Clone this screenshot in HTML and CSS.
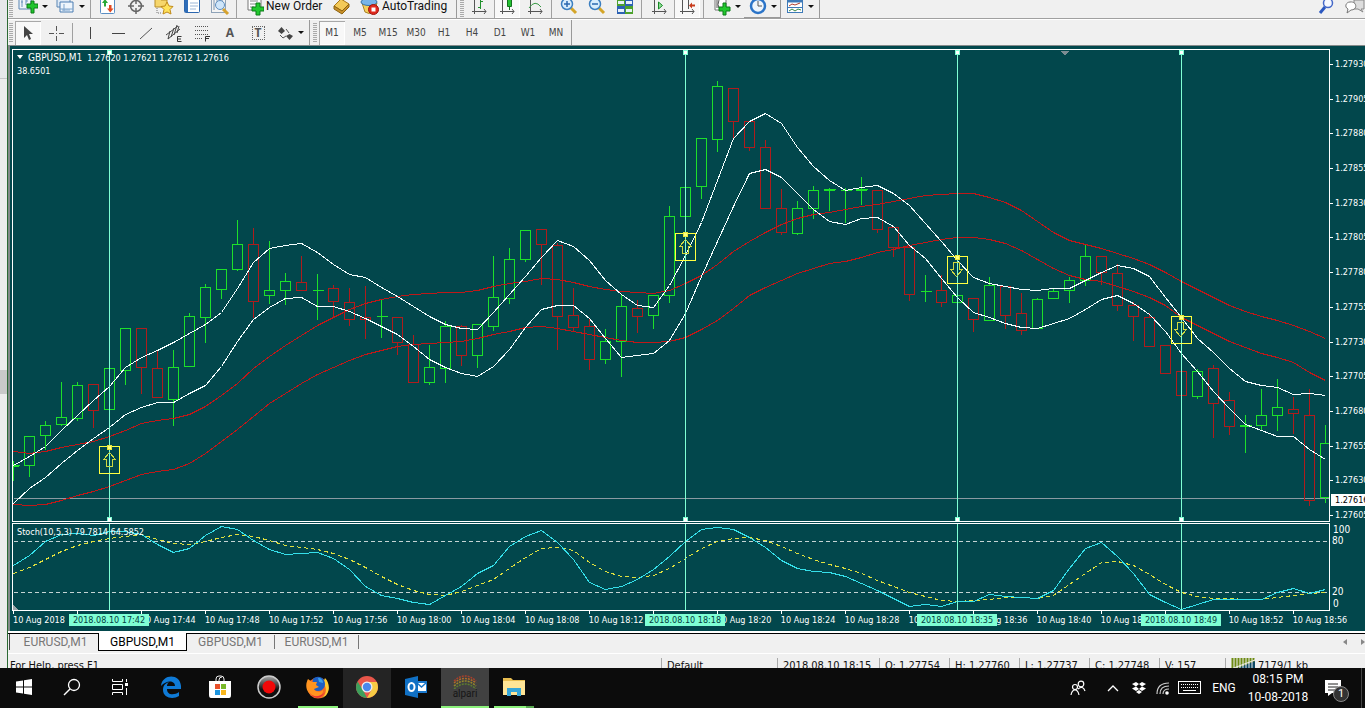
FILE: index.html
```html
<!DOCTYPE html>
<html lang="en">
<head>
<meta charset="utf-8">
<title>GBPUSD,M1</title>
<link rel="stylesheet" href="styles.css">
</head>
<body>
<div class="desktop">
  <div class="workspace">
    <div class="behind"><div class="behind-head"></div><div class="behind-thumb"></div></div>
    <main class="terminal">
      <div class="toolbar toolbar-main">
        <span class="grip"></span>
        <button class="tool tool-drop" aria-label="New chart"><svg width="20" height="18" viewBox="0 0 20 18"><path d="M1 1h12v11H1z" fill="#eef4fa" stroke="#5b86b4"/><path d="M4 3v7M8 2v6M3 5h2M8 4h2" stroke="#6b93bd" fill="none"/><path d="M9 7h4V4h3v3h4v4h-4v5h-3v-5H9z" fill="#1fc42c" stroke="#0a7a16"/></svg><i class="caret"></i></button>
        <button class="tool tool-drop" aria-label="Profiles"><svg width="20" height="18" viewBox="0 0 20 18"><path d="M2 1h13v9H2z" fill="#dfeaf6" stroke="#5b86b4"/><path d="M5 5h13v10H5z" fill="#eef5fc" stroke="#4b7db2"/><path d="M5 12h13M9 7v7M7 13h8" stroke="#7fa5cd"/></svg><i class="caret"></i></button>
        <span class="sep"></span>
        <button class="tool" aria-label="Market watch"><svg width="18" height="18" viewBox="0 0 18 18"><rect x="1.500" y="1.500" width="14" height="15" rx="1" fill="#fff" stroke="#5b8fc4"/><path d="M5 9.500V6H3l3-4 3 4H7v3.500z" fill="#28a838"/><path d="M10 8h2.500v3.500h2l-3.200 4-3.300-4h2z" fill="#e24a22"/></svg></button>
        <button class="tool" aria-label="Data window"><svg width="18" height="18" viewBox="0 0 18 18"><circle cx="9" cy="9" r="5.500" fill="none" stroke="#666" stroke-width="1.500"/><path d="M9 1v6M9 11v6M1 9h6M11 9h6" stroke="#666" stroke-width="1.500"/></svg></button>
        <button class="tool" aria-label="Navigator"><svg width="20" height="18" viewBox="0 0 20 18"><path d="M1 3V1h5l1 2h6v7H1z" fill="#f6d66c" stroke="#b78d28"/><path d="M3 11v5h4" stroke="#777" stroke-dasharray="1 1" fill="none"/><path d="M13 5l2 4 4 .5-3 3 1 4.500-4-2-4 2 1-4.500-3-3 4-.5z" fill="#ffe25a" stroke="#c08a1a"/></svg></button>
        <button class="tool" aria-label="Terminal"><svg width="18" height="18" viewBox="0 0 18 18"><rect x="1.500" y="1.500" width="15" height="14" rx="1" fill="#fff" stroke="#2b66ae"/><path d="M2 2h3v13H2z" fill="#2f6db8"/><path d="M7 6h8M7 9h8M7 12h6" stroke="#9cb6d6"/></svg></button>
        <button class="tool" aria-label="Strategy tester"><svg width="20" height="20" viewBox="0 0 20 20"><rect x="1.500" y="1.500" width="14" height="15" fill="#f4f4f4" stroke="#8fa3b8"/><path d="M4 4v10M7 3v8M12 3v7" stroke="#7d94ad"/><circle cx="10" cy="9" r="4.500" fill="#cfe6fa" stroke="#5f8fc0"/><path d="M13 13l5 5" stroke="#d6a22e" stroke-width="3"/></svg></button>
        <span class="sep"></span>
        <button class="tool tool-text tool-order"><svg width="18" height="20" viewBox="0 0 18 20"><path d="M2 0h10l3 4v10H2z" fill="#fff" stroke="#777"/><path d="M4 5h8M4 8h8M4 11h4" stroke="#888"/><path d="M6 11h4V7h4v4h4v4h-4v4h-4v-4H6z" fill="#22c82e" stroke="#0b7c18"/></svg>New Order</button>
        <button class="tool" aria-label="MetaEditor"><svg width="18" height="18" viewBox="0 0 18 18"><path d="M1 9l7-7 8 5-7 7z" fill="#f4ca58" stroke="#a87818"/><path d="M1 9v3l8 5 7-7V7l-7 7z" fill="#c8902a" stroke="#8e6410"/></svg></button>
        <button class="tool tool-text tool-auto"><svg width="20" height="19" viewBox="0 0 20 19"><path d="M2 6h15l-3 9q-5 3-9 0z" fill="#f5cf5c" stroke="#a88228"/><ellipse cx="9" cy="5" rx="8" ry="3.500" fill="#78b4e8" stroke="#3572a8"/><circle cx="13.500" cy="12.500" r="5" fill="#e02a1e" stroke="#a0140e"/><path d="M11.500 10.500h4v4h-4z" fill="#fff"/></svg>AutoTrading</button>
        <span class="edge"></span>
        <span class="grip"></span>
        <button class="tool" aria-label="Bar chart"><svg width="18" height="18" viewBox="0 0 18 18"><path d="M4.500 2v15M2 14.500h14M14 12l2 2.500-2 2.500" fill="none" stroke="#555"/><path d="M10.500 2v10M8 10.500h3M10 4.500h3" stroke="#20902c" fill="none"/></svg></button>
        <button class="tool pressed" aria-label="Candlesticks"><svg width="18" height="18" viewBox="0 0 18 18"><path d="M4.500 2v15M2 14.500h14M14 12l2 2.500-2 2.500" fill="none" stroke="#555"/><path d="M11.500 1v12" stroke="#15701f"/><path d="M9.500 2.500h4v7h-4z" fill="#24c232" stroke="#15701f"/></svg></button>
        <button class="tool" aria-label="Line chart"><svg width="18" height="18" viewBox="0 0 18 18"><path d="M4.500 2v15M2 14.500h14M14 12l2 2.500-2 2.500" fill="none" stroke="#555"/><path d="M3 11q6-9 12-1" stroke="#3a9a46" fill="none"/></svg></button>
        <span class="sep"></span>
        <button class="tool" aria-label="Zoom in"><svg width="18" height="18" viewBox="0 0 18 18"><path d="M11 11l5 5" stroke="#d4a528" stroke-width="3"/><circle cx="7" cy="7" r="5.500" fill="#d8edfc" stroke="#3c7fc0" stroke-width="1.500"/><path d="M4 7h6M7 4v6" stroke="#2a68b0" stroke-width="1.500"/></svg></button>
        <button class="tool" aria-label="Zoom out"><svg width="18" height="18" viewBox="0 0 18 18"><path d="M11 11l5 5" stroke="#d4a528" stroke-width="3"/><circle cx="7" cy="7" r="5.500" fill="#d8edfc" stroke="#3c7fc0" stroke-width="1.500"/><path d="M4 7h6" stroke="#2a68b0" stroke-width="1.500"/></svg></button>
        <button class="tool" aria-label="Tile windows"><svg width="18" height="18" viewBox="0 0 18 18"><path d="M1 1h8v8H1z" fill="#4da22c"/><path d="M9 1h8v8H9z" fill="#2d62b4"/><path d="M1 9h8v8H1z" fill="#2d62b4"/><path d="M9 9h8v8H9z" fill="#4da22c"/><path d="M2 4h6v3H2zM10 4h6v3h-6zM2 12h6v3H2zM10 12h6v3h-6z" fill="#e8f2f8"/></svg></button>
        <span class="sep"></span>
        <button class="tool" aria-label="Auto scroll"><svg width="18" height="18" viewBox="0 0 18 18"><path d="M4.500 2v15M2 14.500h14M14 12l2 2.500-2 2.500" fill="none" stroke="#555"/><path d="M8.500 5l4 3.500-4 3.500z" fill="#8fdc96" stroke="#168a24"/></svg></button>
        <button class="tool pressed" aria-label="Chart shift"><svg width="18" height="18" viewBox="0 0 18 18"><path d="M4.500 2v15M2 14.500h14M14 12l2 2.500-2 2.500M10.500 2v10" fill="none" stroke="#555"/><path d="M11 8.500l3-3v2h3v2h-3v2z" fill="#c83c1c"/></svg></button>
        <span class="sep"></span>
        <button class="tool tool-drop" aria-label="Indicators"><svg width="20" height="20" viewBox="0 0 20 20"><path d="M4 1h9l2 3v10H4z" fill="#fff" stroke="#777"/><path d="M6 3v9M8 4q-2 5 0 8" stroke="#555" fill="none"/><path d="M8 11h4V7h3v4h4v4h-4v4h-3v-4H8z" fill="#22c82e" stroke="#0b7c18"/></svg><i class="caret"></i></button>
        <button class="tool tool-drop framed" aria-label="Periodicity"><svg width="18" height="18" viewBox="0 0 18 18"><circle cx="9" cy="9" r="7" fill="#eef5fc" stroke="#2b74c8" stroke-width="2.500"/><path d="M9 4v5h4" fill="none" stroke="#555"/></svg><i class="caret"></i></button>
        <button class="tool tool-drop" aria-label="Templates"><svg width="18" height="18" viewBox="0 0 18 18"><rect x="1.500" y="1.500" width="15" height="14" fill="#fff" stroke="#3e7ab8"/><path d="M2 4h14" stroke="#3e7ab8" stroke-width="3"/><path d="M3 9l3-2 3 1 5-2" stroke="#b04030" fill="none"/><path d="M2 10.500h14" stroke="#3e7ab8"/><path d="M3 14l3-2 3 2 3-2 3 1" stroke="#3a8a4a" fill="none"/></svg><i class="caret"></i></button>
        <span class="edge"></span>
        <div class="corner">
          <button class="tool" aria-label="Search"><svg width="18" height="18" viewBox="0 0 18 18"><path d="M7 10l-5 6" stroke="#2b58c0" stroke-width="3"/><circle cx="10" cy="6" r="4.500" fill="#f6f9ff" stroke="#4468c8" stroke-width="1.500"/></svg></button>
          <button class="tool tool-chat" aria-label="Chat"><svg width="24" height="18" viewBox="0 0 24 18"><path d="M13 3h10v9h-3l2 3-5-3h-4z" fill="#ddd" stroke="#888"/><path d="M9 5c7-1 8 8 1 8l-4 3 1-4c-4-2-2-7 2-7z" fill="#fff" stroke="#777"/></svg></button>
        </div>
      </div>

      <div class="toolbar toolbar-line">
        <span class="grip"></span>
        <button class="tool pressed" aria-label="Cursor"><svg width="18" height="18" viewBox="0 0 18 18"><path d="M5 2v12l3-3 2 5 2-1-2-5h4z" fill="#444"/></svg></button>
        <button class="tool" aria-label="Crosshair"><svg width="18" height="18" viewBox="0 0 18 18"><path d="M9.500 2v5M9.500 12v5M2 9.500h5M12 9.500h5M9 9.500h1" stroke="#555"/></svg></button>
        <span class="sep"></span>
        <button class="tool" aria-label="Vertical line"><svg width="18" height="18" viewBox="0 0 18 18"><path d="M9.500 3v12" stroke="#444"/></svg></button>
        <button class="tool" aria-label="Horizontal line"><svg width="18" height="18" viewBox="0 0 18 18"><path d="M3 9.500h13" stroke="#444"/></svg></button>
        <button class="tool" aria-label="Trendline"><svg width="18" height="18" viewBox="0 0 18 18"><path d="M3 15L15 4" stroke="#555"/></svg></button>
        <button class="tool" aria-label="Channel"><svg width="20" height="20" viewBox="0 0 20 20"><path d="M2 12L14 3M4 16L16 6M6 8l-2 8M10 5l-3 9M13 2l-3 10M15 3l-2 7" stroke="#444" fill="none"/><path d="M17.500 13.500h-4v5h4M13 16h4" stroke="#333" fill="none"/></svg></button>
        <button class="tool" aria-label="Fibonacci"><svg width="20" height="20" viewBox="0 0 20 20"><path d="M3 3.500h14M3 7.500h14M3 11.500h14M3 15.500h8" stroke="#555" stroke-dasharray="1 1"/><path d="M13.500 18.500v-5H18M14 15.500h3" stroke="#333" fill="none"/></svg></button>
        <button class="tool tool-letter">A</button>
        <button class="tool tool-letter" aria-label="Text label"><span class="dotted">T</span></button>
        <button class="tool tool-drop" aria-label="Arrows"><svg width="18" height="18" viewBox="0 0 18 18"><path d="M2 7l3.500-4L9 7l-3.500 3zM10 12l3.500-2 3.500 2-3.500 4z" fill="#444"/><path d="M4 11l3 3 3-2M10 5l3 4" stroke="#555" fill="none"/></svg><i class="caret"></i></button>
        <span class="edge"></span>
        <span class="grip"></span>
        <button class="tool period pressed">M1</button>
        <button class="tool period">M5</button>
        <button class="tool period">M15</button>
        <button class="tool period">M30</button>
        <button class="tool period">H1</button>
        <button class="tool period">H4</button>
        <button class="tool period">D1</button>
        <button class="tool period">W1</button>
        <button class="tool period">MN</button>
        <span class="edge"></span>
      </div>

      <section class="chart">
        <div class="panel">
          <svg id="prices" class="plot" viewBox="12.5 49.5 1316 471" preserveAspectRatio="none" role="img" aria-label="GBPUSD one minute candles"></svg>
          <div class="caption"><span class="caption-caret"></span><span class="symbol">GBPUSD,M1</span>&nbsp; 1.27620 1.27621 1.27612 1.27616<br>38.6501</div>
        </div>
        <div class="scale" id="price-scale"></div>
        <div class="panel panel-stoch">
          <svg id="stoch" class="plot" viewBox="12.5 523.5 1316 86" preserveAspectRatio="none" role="img" aria-label="Stochastic oscillator"></svg>
          <div class="caption caption-stoch">Stoch(10,5,3) 79.7814 64.5852</div>
        </div>
        <div class="scale scale-stoch"><span>100</span><span class="level">80</span><span class="level level-low">20</span><span>0</span></div>
        <div class="times" id="times"></div>
      </section>

      <nav class="tabs">
        <button class="tab">EURUSD,M1</button>
        <button class="tab tab-active">GBPUSD,M1</button>
        <button class="tab tab-rule">GBPUSD,M1</button>
        <button class="tab tab-rule">EURUSD,M1</button>
        <span class="tab-arrows"><i class="arrow-left"></i><i class="arrow-right"></i></span>
      </nav>

      <footer class="status">
        <span class="cell cell-help">For Help, press F1</span>
        <span class="cell cell-profile">Default</span>
        <span class="cell cell-date">2018.08.10 18:15</span>
        <span class="cell">O: 1.27754</span>
        <span class="cell">H: 1.27760</span>
        <span class="cell">L: 1.27737</span>
        <span class="cell">C: 1.27748</span>
        <span class="cell cell-volume">V: 157</span>
        <span class="cell cell-net"><svg width="24" height="14" viewBox="0 0 24 14"><path d="M1.500 0v14M4.500 0v14M7.500 0v14M10.500 0v14M13.500 0v14M16.500 0v14M19.500 0v14M22.500 0v14" stroke="#6d8a12" stroke-width="2"/><path d="M0 13L24 3v11H0z" fill="#0e4a66"/><path d="M0 11L24 2M6 9v5M9 8v6M12 7v7M15 6v8M18 5v9M21 4v10" stroke="#efefef"/></svg>7179/1 kb</span>
      </footer>
    </main>
  </div>

  <div class="taskbar">
    <button class="task" aria-label="Start"><svg width="18" height="18" viewBox="0 0 18 18"><path d="M1 3.500l7-1V8.500H1zM9 2.300L17 1v7.500H9zM1 9.500h7v6l-7-1zM9 9.500h8V17l-8-1.200z" fill="#fff"/></svg></button>
    <button class="task" aria-label="Search"><svg width="18" height="18" viewBox="0 0 18 18"><circle cx="11" cy="7" r="5.500" fill="none" stroke="#fff" stroke-width="1.300"/><path d="M7 11l-6 6" stroke="#fff" stroke-width="1.500"/></svg></button>
    <button class="task" aria-label="Task view"><svg width="18" height="18" viewBox="0 0 18 18"><path d="M1.500 1v2.500h10V1M1.500 6.500h10v5h-10zM1.500 17v-2.500h10V17M15.500 1v3M15.500 10v7" fill="none" stroke="#fff"/><path d="M14 5h3v3h-3z" fill="#fff"/></svg></button>
    <div class="apps">
      <button class="task" aria-label="Edge"><svg width="22" height="24" viewBox="0 0 22 24"><path d="M1 11C2-1 20-2 21 11v3H7c0 7 8 6 12 3v4c-6 4-16 2-16-6 0-5 3-7 6-8-2 2-2 3-2 4h8c0-6-9-6-14 0z" fill="#0f7ad6"/></svg></button>
      <button class="task" aria-label="Store"><svg width="24" height="24" viewBox="0 0 24 24"><path d="M8 6V4q0-3 3-3h2q3 0 3 3v2M11 6V5q0-3 3-3" fill="none" stroke="#eee"/><path d="M1 6h22v14q0 3-2 3H3q-2 0-2-3z" fill="#fff"/><path d="M7 9h5v5H7z" fill="#e8502a"/><path d="M13 9h5v5h-5z" fill="#78b828"/><path d="M7 15h5v5H7z" fill="#1e96e0"/><path d="M13 15h5v5h-5z" fill="#f8b61c"/></svg></button>
      <button class="task" aria-label="Recorder"><svg width="26" height="26" viewBox="0 0 26 26"><defs><linearGradient id="rim" x2="0" y2="1"><stop stop-color="#aaa"/><stop offset=".6" stop-color="#111"/></linearGradient></defs><circle cx="13" cy="13" r="11" fill="url(#rim)" stroke="#ccc" stroke-width="1.500"/><circle cx="13" cy="13" r="6.500" fill="#f00808"/></svg></button>
      <button class="task task-open" aria-label="Firefox"><svg width="24" height="24" viewBox="0 0 24 24"><circle cx="12" cy="13" r="10.500" fill="#f36a24"/><path d="M19 3c6 6 5 17-3 20 5-4 5-11 1-15z" fill="#ffcb30"/><path d="M7 4c3-3 8-3 11 1 3 6-1 11-6 11-6 0-6-6-5-12z" fill="#1d5fc4"/><path d="M12 3c3 0 5 2 5 5l-4-1z" fill="#3aa0e8"/><path d="M2 4l4 3h5l-1 3 3 2-5 2c1 3 6 4 9 1 1 6-9 9-14 3-4-5-3-10-1-14z" fill="#ff9420"/><path d="M2 14c2 8 11 10 17 3-3 7-13 9-17-3z" fill="#e62e34"/></svg></button>
      <button class="task task-hover" aria-label="Chrome"><svg width="24" height="24" viewBox="0 0 24 24"><circle cx="12" cy="12" r="11" fill="#e8564a"/><path d="M2.500 6.500L8 15l4 8A11 11 0 0 1 2.500 6.500z" fill="#3ca05c"/><path d="M12 7h9.800A11 11 0 0 1 12 23l5-9z" fill="#f7cb44"/><circle cx="12" cy="12" r="5.500" fill="#eee"/><circle cx="12" cy="12" r="4.200" fill="#4a88ec"/></svg></button>
      <button class="task" aria-label="Outlook"><svg width="24" height="24" viewBox="0 0 24 24"><path d="M12 6h11v12H12z" fill="#1a78cc"/><path d="M13 8h9v8h-9z" fill="#fff"/><path d="M13 8l4.500 4L22 8" stroke="#1a78cc" fill="none" stroke-width="1.500"/><path d="M1 4l13-3v22L1 20z" fill="#1070c4"/><ellipse cx="7.500" cy="12" rx="3" ry="4" fill="none" stroke="#fff" stroke-width="2"/></svg></button>
      <button class="task task-active"><svg width="24" height="14" viewBox="0 0 24 14"><g fill="none" stroke-width="1.500" stroke-dasharray="2 1"><path d="M1 6Q12-4 23 6" stroke="#a8402c"/><path d="M1 8Q12-1 23 8" stroke="#b06a28"/><path d="M1 11Q12 1 23 11" stroke="#96882a"/><path d="M1 14Q12 4 23 14" stroke="#5c7c30"/></g></svg><span class="alpari">alpari</span></button>
      <button class="task task-open task-multi" aria-label="File Explorer"><svg width="24" height="20" viewBox="0 0 24 20"><path d="M1 1h8l2 2h12v15H1z" fill="#e8bd50"/><path d="M1 4h22v14H1z" fill="#ffe596"/><path d="M5 19v-8h14v8h-4v-4H9v4z" fill="#36a6d8"/></svg></button>
    </div>
    <div class="tray">
      <button class="tray-icon" aria-label="People"><svg width="16" height="16" viewBox="0 0 16 16" fill="none" stroke="#fff" stroke-width="1.200"><circle cx="11" cy="4" r="2.800"/><circle cx="5" cy="7" r="2.500"/><path d="M1 15q1-5 4-5t4 5M8 9q5-4 7 2"/></svg></button>
      <button class="tray-icon tray-chevron" aria-label="Hidden icons"><svg width="12" height="8" viewBox="0 0 12 8"><path d="M1 7l5-5 5 5" fill="none" stroke="#fff" stroke-width="1.300"/></svg></button>
      <button class="tray-icon tray-small" aria-label="Dropbox"><svg width="14" height="14" viewBox="0 0 14 14"><path d="M4 1l3 2-3 2.500L0 3zM10 1l4 2-4 2.500L7 3zM4 5.500L7 8l-3 2-4-2.500zM10 5.500l4 2L10 10 7 8zM4 11l3-2 3 2-3 2z" fill="#fff"/></svg></button>
      <button class="tray-icon tray-small" aria-label="Network"><svg width="14" height="14" viewBox="0 0 14 14"><g fill="none" stroke="#ccc" stroke-width="1.200"><path d="M1 13Q1 2 13 2M4 13Q4 5 13 5M7 13Q7 8 13 8"/></g><circle cx="11" cy="12" r="1.800" fill="#fff"/></svg></button>
      <button class="tray-icon tray-keys" aria-label="Keyboard"><svg width="24" height="14" viewBox="0 0 24 14"><rect x=".5" y=".5" width="22" height="12" fill="none" stroke="#fff"/><path d="M3 3.500h18M3 6.500h18" stroke="#fff" stroke-dasharray="1 1"/><path d="M5 9.500h13" stroke="#fff"/></svg></button>
      <button class="tray-lang">ENG</button>
      <button class="clock">08:15 PM<br>10-08-2018</button>
      <button class="notes" aria-label="Notifications"><svg width="18" height="18" viewBox="0 0 18 18"><path d="M1 1h16v13H8l-4 3v-3H1z" fill="#fff"/><path d="M4 5h10M4 8h10M4 11h7" stroke="#222"/></svg><span class="count">1</span></button>
      <span class="peek"></span>
    </div>
  </div>
</div>
<script src="chart.js"></script>
</body>
</html>
```
FILE: styles.css
```css
* { box-sizing: border-box; }
body {
  margin: 0;
  font-family: "DejaVu Sans Condensed", "DejaVu Sans", sans-serif;
  font-size: 10px;
  color: #222;
}
button {
  margin: 0;
  padding: 0;
  border: 0;
  background: none;
  font: inherit;
  color: inherit;
}
svg { display: block; flex: none; }
.desktop { display: flex; flex-direction: column; height: 100vh; overflow: hidden; }
.workspace { display: flex; flex: 1; min-height: 0; }

.behind {
  display: flex;
  flex-direction: column;
  flex: none;
  width: 8px;
  background: #ececec;
  border-right: 1px solid #2c6a34;
}
.behind-head { height: 79px; background: #e6e8ea; border-bottom: 1px solid #c4c6c8; }
.behind-thumb { height: 24px; margin-top: 291px; background: #c9c9c9; }

.terminal { display: flex; flex-direction: column; flex: 1; min-width: 0; background: #f0f0f0; }

/* Toolbars */
.toolbar { display: flex; flex: none; overflow: hidden; }
.toolbar-main {
  align-items: flex-end;
  height: 20px;
  background: linear-gradient(#f0f0f0 18px, #a0a0a0 18px, #a0a0a0 19px, #fff 19px);
  padding-bottom: 2px;
}
.toolbar-line { align-items: center; height: 25px; }
.tool {
  display: flex;
  align-items: center;
  justify-content: center;
  flex: none;
  width: 28px;
  height: 24px;
}
.tool.pressed { background: #f8f8f8; box-shadow: inset 1px 1px #a8a8a8, inset -1px -1px #fff; width: 26px; margin: 0 1px; }
.tool-drop { width: 37px; gap: 4px; }
.toolbar-line .tool-drop { width: 36px; }
.tool.framed { box-shadow: inset 0 -1px #999, inset -1px 0 #999; }
.caret { border: 3px solid transparent; border-top-color: #111; border-bottom: 0; }
.tool-text { justify-content: flex-start; padding-left: 6px; gap: 2px; font: 12px Roboto, sans-serif; color: #111; }
.tool-order { width: 88px; }
.tool-auto { width: 99px; padding-left: 4px; }
.tool-letter { font: bold 12px "Open Sans", sans-serif; color: #555; }
.dotted { border: 1px dotted #666; width: 13px; line-height: 12px; text-align: center; }
.period { color: #444; }
.grip {
  flex: none;
  width: 4px;
  height: 20px;
  margin: 0 1px;
  background: repeating-linear-gradient(#aaa 0 1px, #f0f0f0 1px 2px);
}
.sep { flex: none; width: 1px; height: 20px; margin: 0 3px 0 2px; background: #a0a0a0; }
.edge { flex: none; width: 1px; height: 26px; margin: 0 2px 0 1px; background: #999; }
.corner { display: flex; margin-left: auto; }
.corner .tool-chat { width: 24px; }

/* Chart */
.chart {
  display: grid;
  grid-template-columns: minmax(0, 1fr) 35px;
  grid-template-rows: minmax(0, 473fr) 1px minmax(0, 88fr) 20px;
  flex: 1;
  min-height: 0;
  padding: 3px 0 0 2px;
  border-top: 1px solid #848a8a;
  border-left: 2px solid #848a8a;
  background: #02474c;
  color: #fff;
  font-size: 9px;
  overflow: hidden;
}
.panel { position: relative; border: 1px solid #fff; min-height: 0; }
.panel-stoch, .scale-stoch { grid-row: 3; }
.plot { width: 100%; height: 100%; shape-rendering: crispEdges; }
.plot * { vector-effect: non-scaling-stroke; }
.caption { position: absolute; left: 4px; top: 1px; line-height: 13px; white-space: nowrap; }
.caption-stoch { top: 2px; }
.symbol { font-size: 10px; }
.caption-caret {
  display: inline-block;
  margin: 0 5px 2px 0;
  border: 3px solid transparent;
  border-top: 4px solid #fff;
  border-bottom: 0;
}
.scale {
  position: relative;
  display: flex;
  flex-direction: column;
  justify-content: space-between;
  padding: 9px 0 1px;
  line-height: 12px;
  white-space: nowrap;
}
.scale .mark { padding-left: 5px; background: linear-gradient(#fff, #fff) 0 6px / 3px 1px no-repeat; }
.scale .current { position: absolute; left: 1px; right: 0; top: 94%; padding-left: 4px; background: #fff; color: #000; }
.scale-stoch { padding: 1px 0 1px 3px; font-size: 10px; }
.scale-stoch .level { position: absolute; left: 2px; top: 12px; }
.scale-stoch .level-low { top: 63px; }
.times { position: relative; display: flex; grid-column: 1; grid-row: 4; padding-left: 1px; }
.time { flex: 0 0 calc(100% * 64 / 1317); min-width: 0; white-space: nowrap; line-height: 18px; background: linear-gradient(#fff, #fff) 0 0 / 1px 3px no-repeat; }
.stamp {
  position: absolute;
  top: 3px;
  width: 80px;
  margin-left: -40px;
  line-height: 12px;
  background: #7fffd4;
  color: #023c40;
  text-align: center;
  white-space: nowrap;
}

/* Chart tabs */
.tabs {
  display: flex;
  flex: none;
  height: 22px;
  padding-left: 1px;
  background: linear-gradient(#fff 2px, #000 2px, #000 3px, #f0f0f0 3px);
  font: 12px/18px Roboto, sans-serif;
  color: #777;
}
.tab { width: 89px; height: 16px; margin-top: 3px; padding-left: 3px; line-height: 16px; }
.tab:first-child { border-left: 1px solid #444; }
.tab-active { height: 18px; margin-top: 2px; padding-left: 0; background: #fff; border: 1px solid #000; border-top: 0; color: #000; }
.tab-rule { border-right: 1px solid #777; padding-left: 0; width: 88px; height: 14px; margin-top: 4px; line-height: 14px; }
.tab-rule + .tab-rule { width: 84px; }
.tab-arrows { display: flex; align-items: center; gap: 14px; margin-left: auto; }
.arrow-left, .arrow-right { border: 3px solid transparent; }
.arrow-left { border-right: 4px solid #888; border-left: 0; }
.arrow-right { border-left: 4px solid #888; border-right: 0; }

/* Status bar */
.status {
  display: flex;
  flex: none;
  height: 15px;
  padding-top: 4px;
  border-top: 1px solid #fff;
  overflow: hidden;
  font-size: 11px;
  line-height: 16px;
  color: #111;
}
.cell { flex: none; width: 70px; height: 20px; padding-left: 5px; border-left: 1px solid #aaa; white-space: nowrap; }
.cell-help { flex: 1; padding-left: 2px; border-left: 0; }
.cell-profile { width: 116px; }
.cell-date { width: 102px; }
.cell-volume { width: 66px; }
.cell-net { display: flex; gap: 3px; width: 140px; }

/* Taskbar */
.taskbar { display: flex; flex: none; height: 40px; background: #0c0c0c; color: #fff; font-family: Roboto, sans-serif; }
.task { display: flex; flex-direction: column; align-items: center; justify-content: center; width: 48px; height: 40px; border-bottom: 2px solid transparent; }
.apps { display: flex; gap: 1px; margin-left: 3px; }
.task-open { background: linear-gradient(#8cf27c, #8cf27c) center bottom / 40px 2px no-repeat border-box; }
.task-multi { background: linear-gradient(90deg, #8cf27c 32px, #58a850 32px) center bottom / 40px 2px no-repeat border-box; }
.task-hover { background: #242424; }
.task-active { background: #414141; border-bottom-color: #8cf27c; }
.alpari { font-size: 10px; line-height: 10px; color: #161616; }
.tray { display: flex; align-items: center; margin-left: auto; font-size: 12px; }
.tray-icon { display: flex; justify-content: center; width: 42px; }
.tray-chevron { width: 28px; }
.tray-small { width: 24px; }
.tray-keys { width: 30px; }
.tray-lang { width: 38px; }
.clock { width: 70px; line-height: 18px; }
.notes { position: relative; display: flex; justify-content: center; width: 40px; }
.count {
  position: absolute;
  left: 20px;
  top: 7px;
  width: 16px;
  height: 16px;
  border: 1px solid #888;
  border-radius: 50%;
  background: #333;
  font-size: 11px;
  line-height: 14px;
}
.peek { width: 1px; height: 40px; margin: 0 3px 0 8px; background: #444; }
```
FILE: chart.js
```js
const NS = "http://www.w3.org/2000/svg";
const GREEN = "#1de02a", RED = "#b01c1c", AQUA = "#7fffd4", YELLOW = "#e8e83c";
const X0 = 13, STEP = 16;

function add(parent, name, attrs) {
  const el = document.createElementNS(NS, name);
  for (const key in attrs) el.setAttribute(key, attrs[key]);
  parent.appendChild(el);
}
function line(parent, ys, stroke, extra) {
  const points = ys.map((y, i) => (X0 + STEP * i) + "," + y).join(" ");
  add(parent, "polyline", Object.assign({ points, stroke, fill: "none" }, extra));
}

// [direction, high, body top, body bottom, low] for every minute bar
const bars = [
  [1,460,465,466,480],[1,435,436,465,476],[1,420,425,435,449],[1,381,417,424,425],[1,381,385,418,420],
  [0,384,384,410,427],[1,368,368,409,409],[1,327,328,370,384],[0,328,328,367,393],[0,350,368,397,397],
  [1,349,367,399,425],[1,312,316,366,366],[1,283,287,317,342],[1,269,269,289,298],[1,219,244,269,270],
  [0,227,244,301,317],[1,240,290,295,303],[1,272,281,290,304],[0,255,282,290,290],[1,273,290,290,319],
  [0,284,288,301,316],[0,287,302,319,325],[0,285,317,319,338],[1,299,316,316,337],[0,317,317,342,354],
  [0,334,344,382,382],[1,344,367,382,384],[1,320,326,368,382],[0,324,326,355,365],[1,324,324,355,367],
  [1,255,297,326,330],[1,247,259,298,303],[1,229,230,259,261],[0,229,229,244,284],[0,242,245,316,349],
  [0,287,315,327,331],[0,318,326,359,369],[1,328,341,359,363],[1,294,306,341,376],[0,299,308,316,332],
  [1,294,295,315,328],[1,205,216,295,302],[1,187,187,216,216],[1,138,138,186,198],[1,80,86,139,151],
  [0,88,88,121,137],[0,121,121,147,150],[0,139,147,208,208],[0,188,208,232,234],[1,200,208,233,234],
  [1,185,190,208,218],[1,187,189,190,210],[1,187,190,190,222],[1,176,189,190,204],[0,190,190,229,232],
  [0,227,227,247,256],[0,244,247,294,300],[1,274,291,291,301],[0,274,290,302,306],[1,291,295,302,302],
  [0,297,298,319,331],[1,276,285,320,320],[0,286,286,315,328],[0,292,313,330,334],[1,297,299,328,328],
  [1,287,291,298,298],[1,276,280,290,302],[1,244,256,280,285],[0,256,256,272,284],[0,263,273,305,310],
  [0,301,305,316,340],[0,312,317,346,346],[0,345,345,373,373],[0,371,371,395,395],[1,368,371,396,398],
  [0,364,368,403,437],[0,391,400,426,434],[1,414,425,426,452],[1,388,415,425,430],[1,378,407,415,430],
  [0,396,409,413,433],[0,388,415,500,505],[1,424,443,497,502]
];
const fastHigh = [465,456,446,430,415,400,386,367,357,350,342,333,324,312,288,262,248,245,243,252,264,274,277,287,296,306,316,324,328,329,312,294,276,257,240,246,260,280,294,305,307,285,255,222,180,138,121,113,123,147,166,180,190,187,185,193,205,223,241,260,277,283,286,289,290,288,288,280,272,265,268,276,297,317,338,352,368,381,385,387,394,393,395];
const fastLow = [503,488,477,463,450,438,427,414,407,402,402,393,385,366,341,319,307,298,297,306,306,311,318,326,334,346,359,367,373,376,366,349,327,309,305,305,318,338,357,355,353,340,313,276,241,206,173,169,177,193,209,221,224,218,217,226,245,258,278,297,312,317,323,327,328,323,318,309,299,295,303,314,331,353,371,391,408,424,430,436,436,449,459];
const slowHigh = [451,453,451,447,444,441,436,430,423,420,418,414,406,395,383,368,356,345,335,325,317,309,303,299,296,294,293,292,292,290,286,283,281,278,279,282,286,289,291,292,293,290,283,275,264,251,241,232,224,218,214,212,209,206,204,201,198,195,194,193,193,197,202,210,221,232,240,244,248,253,258,264,272,281,289,297,305,311,316,320,325,331,338];
const slowLow = [504,505,504,500,495,491,486,480,474,471,469,463,453,441,429,416,403,393,383,374,367,360,354,350,346,344,343,342,341,338,334,331,327,326,328,331,334,337,340,342,342,341,337,329,320,308,295,287,280,273,268,263,261,257,252,249,245,242,239,237,237,239,243,250,259,268,275,279,281,286,291,297,305,317,325,333,341,347,353,357,362,372,380];
const stochMain = [565,555,541,534,533,535,531,531,534,544,552,548,535,526,529,540,549,554,553,552,558,569,586,595,598,602,604,595,586,573,565,546,536,530,542,559,582,589,586,579,569,556,541,529,527,529,537,547,560,568,571,572,576,583,590,598,606,604,606,601,601,594,596,597,598,590,568,548,542,556,573,594,602,609,604,599,599,599,599,592,588,593,589];
const stochSignal = [573,567,559,551,545,541,538,536,534,539,543,544,541,537,534,536,540,545,547,549,553,559,567,576,584,590,594,595,591,585,579,568,557,548,547,550,562,571,576,577,575,568,558,548,541,538,537,540,546,553,559,564,568,573,580,586,592,596,600,601,600,599,597,597,598,595,584,573,562,561,565,574,584,592,596,598,598,599,599,597,595,593,592];
const signals = [
  { x: 109, y: 446, up: true, stamp: "2018.08.10 17:42" },
  { x: 685, y: 233, up: true, stamp: "2018.08.10 18:18" },
  { x: 957, y: 256, up: false, stamp: "2018.08.10 18:35" },
  { x: 1181, y: 316, up: false, stamp: "2018.08.10 18:49" }
];

const prices = document.getElementById("prices");
add(prices, "path", { d: "M13 498H1329", stroke: "#8a9aa2" });
add(prices, "path", { d: "M1059 50h10l-5 5z", fill: "#7c8c92" });
bars.forEach(([up, high, top, bottom, low], i) => {
  const x = X0 + STEP * i, stroke = up ? GREEN : RED;
  const d = `M${x} ${high}V${top}M${x} ${bottom}V${low}` +
    (bottom - top < 2 ? `M${x - 5} ${top}h11` : "");
  add(prices, "path", { d, stroke, fill: "none" });
  if (bottom - top > 0) add(prices, "rect", { x: x - 5, y: top, width: 10, height: bottom - top, stroke, fill: "none" });
});
line(prices, slowHigh, "#c01818");
line(prices, slowLow, "#c01818");
line(prices, fastHigh, "#f4ffff");
line(prices, fastLow, "#f4ffff");
signals.forEach(({ x, y, up }) => {
  add(prices, "path", { d: `M${x} 50V521`, stroke: AQUA });
  for (const hy of [50, 517]) add(prices, "rect", { x: x - 2, y: hy, width: 4, height: 4, fill: "#fff", stroke: AQUA });
  add(prices, "rect", { x: x - 10, y, width: 20, height: 27, fill: "none", stroke: "#ffff40" });
  add(prices, "path", {
    d: up ? `M${x} ${y + 6}l6 7h-3v7h-6v-7h-3z` : `M${x - 1} ${y + 20}l6 -7h-3v-7h-6v7h-3z`,
    fill: "none", stroke: "#d0d840"
  });
  add(prices, "rect", { x: x - 2, y: y - 1, width: 4, height: 4, fill: "#ffff80", stroke: YELLOW });
});

const stoch = document.getElementById("stoch");
for (const y of [541, 592]) add(stoch, "path", { d: `M13 ${y}H1329`, stroke: "#c4d4d4", "stroke-dasharray": "4 3" });
add(stoch, "path", { d: "M12.500 604l5.500 5.500h-5.500z", fill: "#9aa6aa" });
line(stoch, stochSignal, "#e0e040", { "stroke-dasharray": "4 3" });
line(stoch, stochMain, "#35e0ea");
signals.forEach(({ x }) => add(stoch, "path", { d: `M${x} 523V610`, stroke: AQUA }));

const scale = document.getElementById("price-scale");
for (let p = 127930; p >= 127605; p -= 25) {
  const mark = document.createElement("span");
  mark.className = "mark";
  mark.textContent = (p / 100000).toFixed(5);
  scale.appendChild(mark);
}
const current = document.createElement("span");
current.className = "current";
current.textContent = "1.27616";
scale.appendChild(current);

const times = document.getElementById("times");
for (let i = 0; i <= 20; i++) {
  const minutes = 17 * 60 + 36 + 4 * i;
  const time = document.createElement("span");
  time.className = "time";
  time.textContent = "10 Aug " + (i ? Math.floor(minutes / 60) + ":" + String(minutes % 60).padStart(2, "0") : "2018");
  times.appendChild(time);
}
signals.forEach(({ x, stamp }) => {
  const el = document.createElement("span");
  el.className = "stamp";
  el.textContent = stamp;
  el.style.left = ((x - 12) / 1318 * 100) + "%";
  times.appendChild(el);
});
```
